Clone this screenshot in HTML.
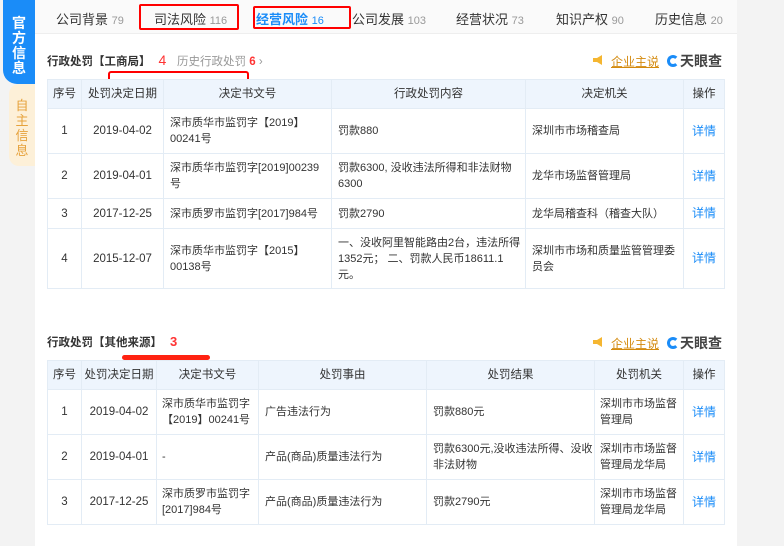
<!DOCTYPE html>
<html><head><meta charset="utf-8"><style>
*{margin:0;padding:0;box-sizing:border-box}
body{width:784px;height:546px;overflow:hidden;background:#f3f3f3;font-family:"Liberation Sans","Noto Sans CJK SC",sans-serif;font-size:12px;color:#333;position:relative}
.panel{position:absolute;left:35px;top:0;width:702px;height:546px;background:#fff}
.nav{position:absolute;left:35px;top:0;width:702px;height:34px;background:#fafafa;border-bottom:1px solid #eee}
.nav span{position:absolute;top:9px;font-size:13px;color:#333;white-space:nowrap}
.nav small{font-size:11px;color:#999}
.tabb{position:absolute;left:3px;top:0;width:32px;height:84px;background:#1a8cf8;border-radius:0 0 0 14px;color:#fff;font-weight:bold;font-size:14px;text-align:center;line-height:15px;padding-top:16px}
.tabo{position:absolute;left:9px;top:84px;width:26px;height:82px;background:#fdf0d8;border-radius:10px 0 0 10px;color:#e6a23c;font-size:13px;text-align:center;line-height:15px;padding-top:14px}
.red{position:absolute;border:2px solid #f00;border-radius:2px}
h3{position:absolute;font-size:11.5px;font-weight:bold;color:#333;white-space:nowrap}
h3 b{color:#f33;margin-left:8px}
.hist{position:absolute;font-size:11.5px;color:#999;white-space:nowrap}
.hist b{color:#f33}
.tools{position:absolute;left:593px;width:140px;height:16px;white-space:nowrap;font-size:12px}
.tools .q{position:absolute;left:18px;top:0;color:#d48a0e;text-decoration:underline}
.tools .tyc{position:absolute;left:74px;top:-2px;font-weight:bold;font-size:14px;color:#444}
.ic{display:inline-block;width:12px;height:12px;border-radius:50%;border:3px solid #1a8cf8;border-right-color:transparent;vertical-align:-1px;margin-right:1px}
.spk{position:absolute;left:0;top:2px;width:12px;height:10px}
table{position:absolute;left:47px;width:677px;border-collapse:collapse;table-layout:fixed}
td,th{border:1px solid #e3ecf5;font-size:11px;line-height:16px;font-weight:normal;color:#333;white-space:nowrap;overflow:hidden}
th{background:#eef5fd;text-align:center;height:29px;font-size:11.5px}
td{padding:0 6px}
td.c{text-align:center;padding:0;font-size:11.5px}
a{color:#1a8cf8;text-decoration:none;font-size:12px}
</style></head><body>
<div class="panel"></div>
<div class="nav">
<span style="left:21px">公司背景 <small>79</small></span>
<span style="left:119px">司法风险 <small>116</small></span>
<span style="left:221px;color:#1a8cf8;font-weight:bold">经营风险 <small style="color:#1a8cf8;font-weight:normal">16</small></span>
<span style="left:317px">公司发展 <small>103</small></span>
<span style="left:421px">经营状况 <small>73</small></span>
<span style="left:521px">知识产权 <small>90</small></span>
<span style="left:620px">历史信息 <small>20</small></span>
</div>
<div class="tabb">官<br>方<br>信<br>息</div>
<div class="tabo">自<br>主<br>信<br>息</div>
<div class="red" style="left:139px;top:4px;width:100px;height:26px"></div>
<div class="red" style="left:253px;top:6px;width:98px;height:23px"></div>

<h3 style="left:47px;top:52px">行政处罚【工商局】<b style="font-weight:normal;font-size:14px">4</b></h3>
<div class="hist" style="left:177px;top:53px">历史行政处罚 <b>6</b> <span style="color:#999">›</span></div>
<div class="red" style="left:108px;top:71px;width:141px;height:11px;border-radius:3px"></div>
<div class="tools" style="top:53px"><svg class="spk" viewBox="0 0 12 10"><path d="M0 3h4l5-3v10l-5-3H0z" fill="#f5b631"/></svg><span class="q">企业主说</span><span class="tyc"><span class="ic"></span>天眼查</span></div>

<table style="top:79px">
<colgroup><col style="width:34px"><col style="width:82px"><col style="width:168px"><col style="width:194px"><col style="width:158px"><col style="width:41px"></colgroup>
<tr><th>序号</th><th>处罚决定日期</th><th>决定书文号</th><th>行政处罚内容</th><th>决定机关</th><th>操作</th></tr>
<tr style="height:45px"><td class="c">1</td><td class="c">2019-04-02</td><td>深市质华市监罚字【2019】<br>00241号</td><td>罚款880</td><td>深圳市市场稽查局</td><td class="c"><a>详情</a></td></tr>
<tr style="height:45px"><td class="c">2</td><td class="c">2019-04-01</td><td>深市质华市监罚字[2019]00239<br>号</td><td>罚款6300, 没收违法所得和非法财物<br>6300</td><td>龙华市场监督管理局</td><td class="c"><a>详情</a></td></tr>
<tr style="height:30px"><td class="c">3</td><td class="c">2017-12-25</td><td>深市质罗市监罚字[2017]984号</td><td>罚款2790</td><td>龙华局稽查科（稽查大队）</td><td class="c"><a>详情</a></td></tr>
<tr style="height:60px"><td class="c">4</td><td class="c">2015-12-07</td><td>深市质华市监罚字【2015】<br>00138号</td><td>一、没收阿里智能路由2台，违法所得<br>1352元； 二、罚款人民币18611.1<br>元。</td><td>深圳市市场和质量监管管理委<br>员会</td><td class="c"><a>详情</a></td></tr>
</table>

<h3 style="left:47px;top:334px">行政处罚【其他来源】<b style="font-size:13px">3</b></h3>
<div style="position:absolute;left:122px;top:355px;width:88px;height:5px;background:#f21;border-radius:3px"></div>
<div class="tools" style="top:335px"><svg class="spk" viewBox="0 0 12 10"><path d="M0 3h4l5-3v10l-5-3H0z" fill="#f5b631"/></svg><span class="q">企业主说</span><span class="tyc"><span class="ic"></span>天眼查</span></div>

<table style="top:360px">
<colgroup><col style="width:34px"><col style="width:75px"><col style="width:102px"><col style="width:168px"><col style="width:168px"><col style="width:89px"><col style="width:41px"></colgroup>
<tr><th>序号</th><th>处罚决定日期</th><th>决定书文号</th><th>处罚事由</th><th>处罚结果</th><th>处罚机关</th><th>操作</th></tr>
<tr style="height:45px"><td class="c">1</td><td class="c">2019-04-02</td><td style="padding:0 5px">深市质华市监罚字<br>【2019】00241号</td><td>广告违法行为</td><td>罚款880元</td><td style="padding:0 5px">深圳市市场监督<br>管理局</td><td class="c"><a>详情</a></td></tr>
<tr style="height:45px"><td class="c">2</td><td class="c">2019-04-01</td><td style="padding:0 5px">-</td><td>产品(商品)质量违法行为</td><td>罚款6300元,没收违法所得、没收<br>非法财物</td><td style="padding:0 5px">深圳市市场监督<br>管理局龙华局</td><td class="c"><a>详情</a></td></tr>
<tr style="height:45px"><td class="c">3</td><td class="c">2017-12-25</td><td style="padding:0 5px">深市质罗市监罚字<br>[2017]984号</td><td>产品(商品)质量违法行为</td><td>罚款2790元</td><td style="padding:0 5px">深圳市市场监督<br>管理局龙华局</td><td class="c"><a>详情</a></td></tr>
</table>
</body></html>
